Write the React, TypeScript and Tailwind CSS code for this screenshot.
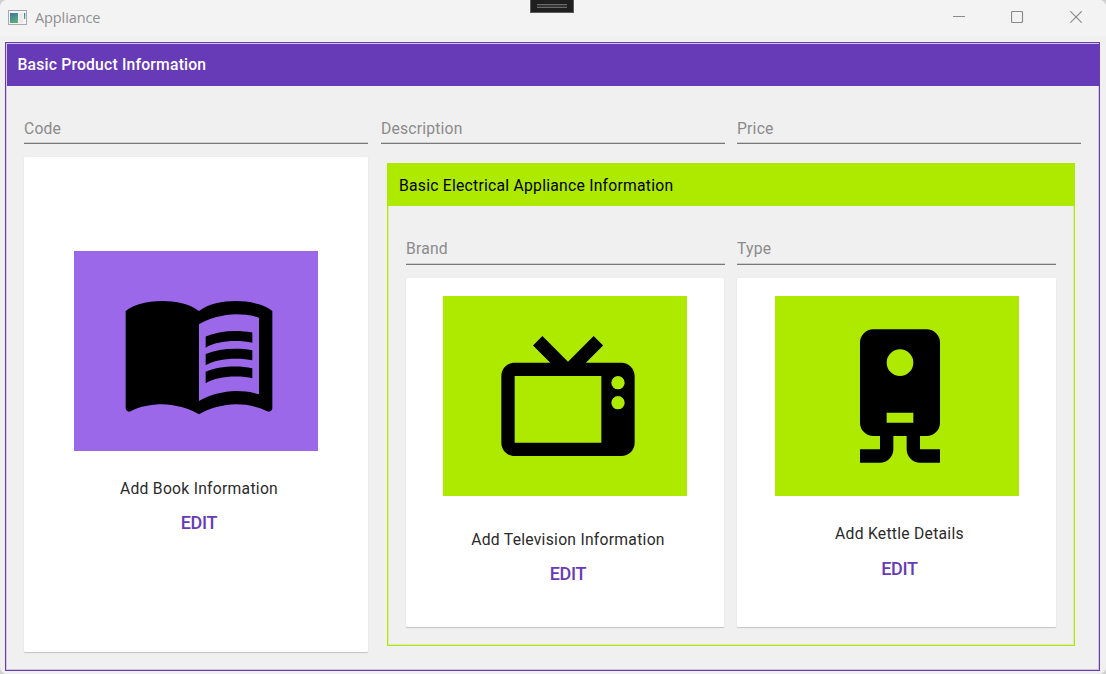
import type { ReactNode } from "react";

const BOOK =
  "M12 21.5C10.65 20.65 8.2 20 6.5 20C4.85 20 3.15 20.3 1.75 21.05C1.65 21.1 1.6 21.1 1.5 21.1C1.25 21.1 1 20.85 1 20.6V6C1.6 5.55 2.25 5.25 3 5C4.11 4.65 5.33 4.5 6.5 4.5C8.45 4.5 10.55 4.9 12 6C13.45 4.9 15.55 4.5 17.5 4.5C18.67 4.5 19.89 4.65 21 5C21.75 5.25 22.4 5.55 23 6V20.6C23 20.85 22.75 21.1 22.5 21.1C22.4 21.1 22.35 21.1 22.25 21.05C20.85 20.3 19.15 20 17.5 20C15.8 20 13.35 20.65 12 21.5M12 8V19.5C13.35 18.65 15.8 18 17.5 18C18.7 18 19.9 18.15 21 18.5V7C19.9 6.65 18.7 6.5 17.5 6.5C15.8 6.5 13.35 7.15 12 8M13 11.5C14.11 10.82 15.6 10.5 17.5 10.5C18.41 10.5 19.26 10.59 20 10.78V9.23C19.13 9.08 18.29 9 17.5 9C15.73 9 14.23 9.28 13 9.84V11.5M17.5 11.67C15.79 11.67 14.29 11.93 13 12.46V14.15C14.11 13.5 15.6 13.16 17.5 13.16C18.54 13.16 19.38 13.24 20 13.4V11.9C19.13 11.74 18.29 11.67 17.5 11.67M20 14.57C19.13 14.41 18.29 14.33 17.5 14.33C15.67 14.33 14.17 14.6 13 15.13V16.82C14.16 16.16 15.66 15.83 17.5 15.83C18.54 15.83 19.38 15.91 20 16.07V14.57Z";

const TELEVISION =
  "M8.16 3L6.75 4.41L9.34 7H4C2.89 7 2 7.89 2 9V19C2 20.11 2.89 21 4 21H20C21.11 21 22 20.11 22 19V9C22 7.89 21.11 7 20 7H14.68L17.27 4.41L15.85 3L12 6.85L8.16 3M4 9H17V19H4V9M19.5 9A1 1 0 0 1 20.5 10A1 1 0 0 1 19.5 11A1 1 0 0 1 18.5 10A1 1 0 0 1 19.5 9M19.5 12A1 1 0 0 1 20.5 13A1 1 0 0 1 19.5 14A1 1 0 0 1 18.5 13A1 1 0 0 1 19.5 12Z";

const KETTLE =
  "M8 2H16A2 2 0 0 1 18 4V16A2 2 0 0 1 16 18H15V20H18V22H15A2 2 0 0 1 13 20V18H11V20A2 2 0 0 1 9 22H6V20H9V18H8A2 2 0 0 1 6 16V4A2 2 0 0 1 8 2M12 5A2 2 0 0 0 10 7A2 2 0 0 0 12 9A2 2 0 0 0 14 7A2 2 0 0 0 12 5M10 14.5V16H14V14.5H10Z";

function Field({ label, width }: { label: string; width: string }) {
  return (
    <div className={`flex flex-col ${width}`}>
      <span className="text-[15.7px] leading-[18px] tracking-[0.2px] text-[#8b8b8b]">{label}</span>
      <div className="mt-auto h-px bg-[#cfcfcf]" />
      <div className="h-px bg-[#7a777c]" />
    </div>
  );
}

function Card({
  size,
  tile,
  icon,
  caption,
  captionGap,
  buttonGap,
}: {
  size: string;
  tile: string;
  icon: string;
  caption: string;
  captionGap: string;
  buttonGap: string;
}) {
  return (
    <div
      className={`flex flex-col items-center rounded-[1px] bg-white shadow-[0_1px_1px_rgba(0,0,0,0.18),0_0_1px_rgba(0,0,0,0.1)] ${size}`}
    >
      <div className={`flex h-[200px] w-[244px] shrink-0 items-center justify-center pl-[6px] ${tile}`}>
        <svg className="size-[160px]" viewBox="0 0 24 24" fill="#000">
          <path fillRule="evenodd" d={icon} />
        </svg>
      </div>
      <p className={`pl-[6px] text-[15.7px] leading-5 tracking-[0.26px] whitespace-nowrap text-[#2b2b2b] ${captionGap}`}>
        {caption}
      </p>
      <button className={`pl-[6px] text-[18px] leading-5 font-medium tracking-[-0.3px] text-[#673ab7] ${buttonGap}`}>
        EDIT
      </button>
    </div>
  );
}

function TitleBar() {
  return (
    <header className="relative flex h-9 items-center bg-[#f3f3f3]">
      <svg className="ml-2 h-4 w-[19px]" viewBox="0 0 19 16">
        <defs>
          <linearGradient id="pane" x1="0" y1="0" x2="0.4" y2="1">
            <stop offset="0" stopColor="#3f74a0" />
            <stop offset="1" stopColor="#5aad7c" />
          </linearGradient>
        </defs>
        <rect x="0.5" y="0.5" width="18" height="14" fill="#f5f5f6" stroke="#a8a9b1" />
        <path d="M1 0.5H18" stroke="#9fa0ad" />
        <rect x="2" y="3" width="8" height="10" fill="url(#pane)" />
        <rect x="11" y="3" width="4" height="10" fill="#ebebeb" />
        <rect x="16" y="3" width="1.3" height="6" fill="url(#pane)" />
      </svg>
      <span className="ml-2 font-['Open_Sans','Noto_Sans',sans-serif] text-[14.5px] leading-5 tracking-[-0.1px] text-[#8f8f8f]">
        Appliance
      </span>
      <div className="mr-[23px] mb-[2px] ml-auto flex gap-[46px] text-[#8b8b8b]">
        <svg className="size-[13px]" viewBox="0 0 13 13" fill="none" stroke="currentColor">
          <path d="M1 5.5H13" />
        </svg>
        <svg className="size-[13px]" viewBox="0 0 13 13" fill="none" stroke="currentColor">
          <rect x="0.5" y="0.5" width="11" height="11" rx="1" strokeWidth="1.2" />
        </svg>
        <svg className="size-[13px]" viewBox="0 0 13 13" fill="none" stroke="currentColor" strokeWidth="1.2">
          <path d="M0.3 0.3L11.7 11.7M11.7 0.3L0.3 11.7" />
        </svg>
      </div>
      <div className="absolute top-0 left-[530px] flex h-[13px] w-11 flex-col items-center border border-t-0 border-[#5c5c5c] bg-[#1f1f1f] pt-1">
        <div className="h-1 w-[30px] border-y border-[#6a6a6a] bg-[#333]" />
      </div>
    </header>
  );
}

function GroupBox({ frame, header, children }: { frame: string; header: ReactNode; children: ReactNode }) {
  return (
    <section className={`flex flex-col border ${frame}`}>
      {header}
      {children}
    </section>
  );
}

export default function App() {
  return (
    <div className="flex h-[674px] w-[1106px] flex-col overflow-hidden bg-[#cfcfcf] font-['Roboto',sans-serif]">
      <div className="flex h-[674px] flex-col overflow-hidden rounded-[7px] bg-[#f0f0f0]">
        <TitleBar />
        <GroupBox
          frame="mt-[6px] ml-[5px] h-[629px] w-[1095px] shrink-0 border-[#673ab7] shadow-[inset_-1px_-1px_#cfc5df,inset_1px_1px_#d3c8e6]"
          header={
            <h1 className="mt-px ml-px flex h-[42px] shrink-0 items-start bg-[#673ab7] pt-[11px] pl-[10.5px] text-[15.7px] leading-5 font-medium tracking-[0.2px] text-white">
              Basic Product Information
            </h1>
          }
        >
          <div className="ml-[18px] grid grid-cols-[357px_356px_344px] pt-[34px]">
            <Field label="Code" width="h-6 w-[344px]" />
            <Field label="Description" width="h-6 w-[344px]" />
            <Field label="Price" width="h-6 w-[344px]" />
          </div>
          <div className="mt-[13px] ml-[18px] flex">
            <Card
              size="h-[495px] w-[344px] pt-[94px]"
              tile="bg-[#9c68ea]"
              icon={BOOK}
              caption="Add Book Information"
              captionGap="mt-7"
              buttonGap="mt-[14px]"
            />
            <GroupBox
              frame="mt-[6px] ml-[19px] h-[483px] w-[688px] border-[#aeea00] shadow-[inset_0_0_0_1px_#dcecb0]"
              header={
                <h2 className="flex h-[42px] shrink-0 items-start bg-[#aeea00] pt-3 pl-[11px] text-[15.7px] leading-5 tracking-[0.25px] text-black">
                  Basic Electrical Appliance Information
                </h2>
              }
            >
              <div className="ml-[18px] flex gap-3 pt-[34px]">
                <Field label="Brand" width="h-[25px] w-[319px]" />
                <Field label="Type" width="h-[25px] w-[319px]" />
              </div>
              <div className="mt-[13px] ml-[18px] flex gap-[13px]">
                <Card
                  size="h-[349px] w-[318px] pt-[18px]"
                  tile="bg-[#aeea00]"
                  icon={TELEVISION}
                  caption="Add Television Information"
                  captionGap="mt-[34px]"
                  buttonGap="mt-[14px]"
                />
                <Card
                  size="h-[349px] w-[319px] pt-[18px]"
                  tile="bg-[#aeea00]"
                  icon={KETTLE}
                  caption="Add Kettle Details"
                  captionGap="mt-7"
                  buttonGap="mt-[15px]"
                />
              </div>
            </GroupBox>
          </div>
        </GroupBox>
      </div>
    </div>
  );
}
